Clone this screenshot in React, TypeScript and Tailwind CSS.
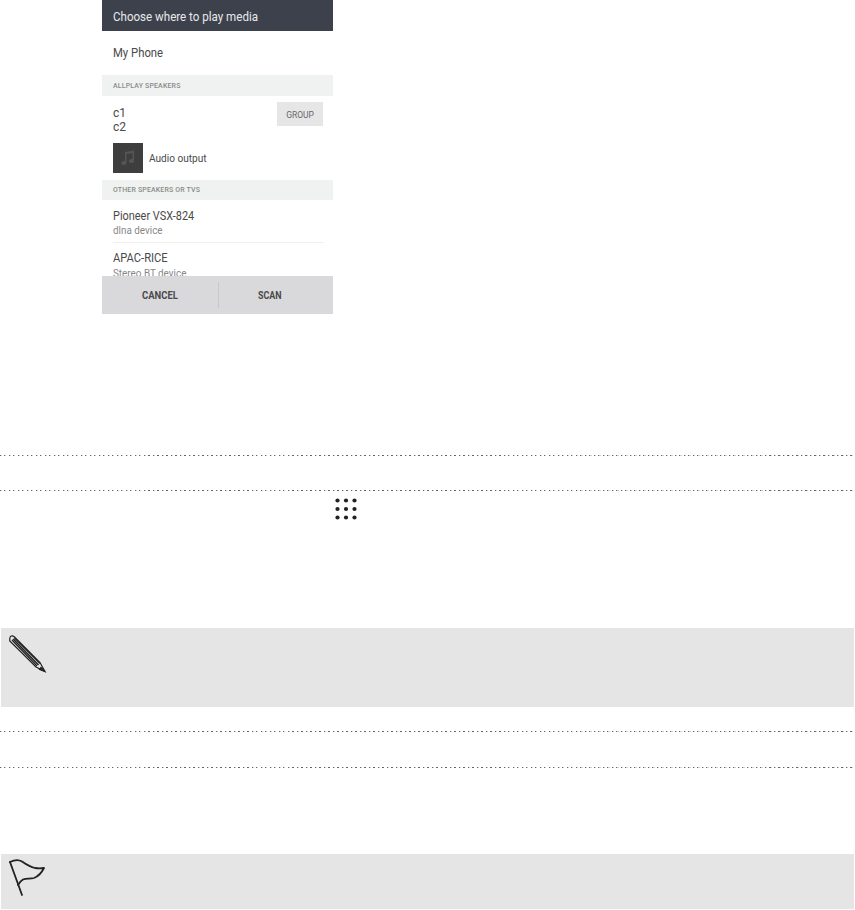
function N({ s = "scale-x-[0.88]", children }: { s?: string; children: React.ReactNode }) {
  return <span className={`inline-block whitespace-nowrap origin-left ${s}`}>{children}</span>;
}

export default function App() {
  const dots = "h-px w-full bg-[repeating-linear-gradient(90deg,#666_0,#666_1px,#cfcfcf_1px,#cfcfcf_2px,transparent_2px,transparent_4.5px)]";
  return (
    <div className="w-[855px] h-[910px] bg-white overflow-hidden flex flex-col font-['Roboto',sans-serif]">
      <div className="ml-[102px] w-[231px] h-[314px] flex flex-col overflow-hidden relative shrink-0">
        <div className="h-[31px] shrink-0 bg-[#3d414c] text-[#e8e9ea] text-[13px] leading-[31px] pl-[11px] pt-px"><N s="scale-x-[0.89]">Choose where to play media</N></div>
        <div className="h-[44px] shrink-0 pl-[11px] text-[#4a4a4a] text-[13px] flex items-center"><N s="scale-x-[0.87]">My Phone</N></div>
        <div className="h-[21px] shrink-0 bg-[#eff2f0] pl-[11px] text-[#8a8a8a] text-[8px] font-medium tracking-[0.2px] flex items-center"><N s="scale-x-[0.87]">ALLPLAY SPEAKERS</N></div>
        <div className="h-[48px] shrink-0 pl-[11px] pr-[10px] flex items-start justify-between pt-[9px]">
          <div className="text-[#4a4a4a] text-[12px] leading-[14px] pt-px">c1<br />c2</div>
          <div className="w-[46px] h-[24px] -mt-[3px] pt-[2px] bg-[#e6e6e6] text-[#666] text-[8.5px] flex items-center justify-center">GROUP</div>
        </div>
        <div className="h-[36px] shrink-0 pl-[11px] flex items-start gap-[6px]">
          <div className="w-[30px] h-[30px] -mt-[1px] bg-[#3e3e3e] flex items-center justify-center">
            <svg width="18" height="18" viewBox="0 0 18 18" fill="#555"><path d="M6 3l9-1.5v10.5a2.5 2 0 1 1-1.5-1.8V4L7.5 5v9a2.5 2 0 1 1-1.5-1.8z" /></svg>
          </div>
          <div className="text-[#4a4a4a] text-[10.5px] leading-[30px]"><N s="scale-x-[0.96]">Audio output</N></div>
        </div>
        <div className="h-[20px] shrink-0 bg-[#eff2f0] pl-[11px] text-[#8a8a8a] text-[8px] font-medium tracking-[0.2px] flex items-center"><N s="scale-x-[0.87]">OTHER SPEAKERS OR TVS</N></div>
        <div className="h-[43px] shrink-0 ml-[11px] mr-[9px] border-b border-[#f0f0f0] flex flex-col justify-center pt-[3px]">
          <div className="text-[#4a4a4a] text-[12px] leading-[16px]"><N s="scale-x-[0.91]">Pioneer VSX-824</N></div>
          <div className="text-[#888] text-[10.5px] leading-[14px]"><N s="scale-x-[0.94]">dlna device</N></div>
        </div>
        <div className="ml-[11px] pt-[7px]">
          <div className="text-[#4a4a4a] text-[12px] leading-[16px]"><N s="scale-x-[0.93]">APAC-RICE</N></div>
          <div className="text-[#888] text-[10.5px] leading-[15px]"><N s="scale-x-[0.94]">Stereo BT device</N></div>
        </div>
        <div className="absolute left-0 right-0 bottom-0 h-[38px] bg-[#d9d9db] flex items-center text-[#4a4a4a] text-[10.5px] font-bold pt-[2px]">
          <div className="w-[116px] text-center pl-[4px]"><N s="scale-x-[0.9] origin-center">CANCEL</N></div>
          <div className="w-px h-[26px] -mt-[2px] bg-[#c8c8cb]" />
          <div className="flex-1 text-center pr-[8px]"><N s="scale-x-[0.85] origin-center">SCAN</N></div>
        </div>
      </div>
      <div className={`${dots} mt-[141px] shrink-0`} />
      <div className={`${dots} mt-[34px] shrink-0`} />
      <div className="h-[137px] shrink-0 pl-[335px] pt-[7px]">
        <svg width="22" height="22" viewBox="0 0 22 22" fill="#222">
          {[2.5, 11, 19.5].flatMap((y) => [2.5, 11, 19.5].map((x) => <circle key={`${x}-${y}`} cx={x} cy={y} r="2.1" />))}
        </svg>
      </div>
      <div className="ml-px mr-px h-[79px] shrink-0 bg-[#e5e5e5] pl-[8px] pt-[6px]">
        <svg width="38" height="40" viewBox="0 0 38 40" fill="none" stroke="#222" strokeWidth="1.2">
          <path d="M0.8 4.5C0.8 2 3 1 5 2.5L31 28.5l5 9-9-4.5L0.8 7z" fill="#e5e5e5" />
          <path d="M3 6L28 32M5.5 4L31 29.5" />
          <path d="M4.2 5L29.5 31" strokeWidth="1.6" />
          <path d="M32 33.5l4 4-5.5-2z" fill="#222" />
        </svg>
      </div>
      <div className={`${dots} mt-[24px] shrink-0`} />
      <div className={`${dots} mt-[35px] shrink-0`} />
      <div className="ml-px mr-px mt-[86px] h-[55px] shrink-0 bg-[#e5e5e5] pl-[8px] pt-[5px]">
        <svg width="38" height="38" viewBox="0 0 38 38" fill="none" stroke="#222" strokeWidth="1.8" strokeLinecap="round" strokeLinejoin="round">
          <path d="M1 3L13 36" />
          <path d="M1 3C5 1 9 0 13 2.5C18 6 22 8 26 9C29 9.5 32 9.5 35 9C33 13 30 17 25 19C21 20 17 19 14 20.5C11.5 22 10 24 9 26" />
        </svg>
      </div>
    </div>
  );
}
